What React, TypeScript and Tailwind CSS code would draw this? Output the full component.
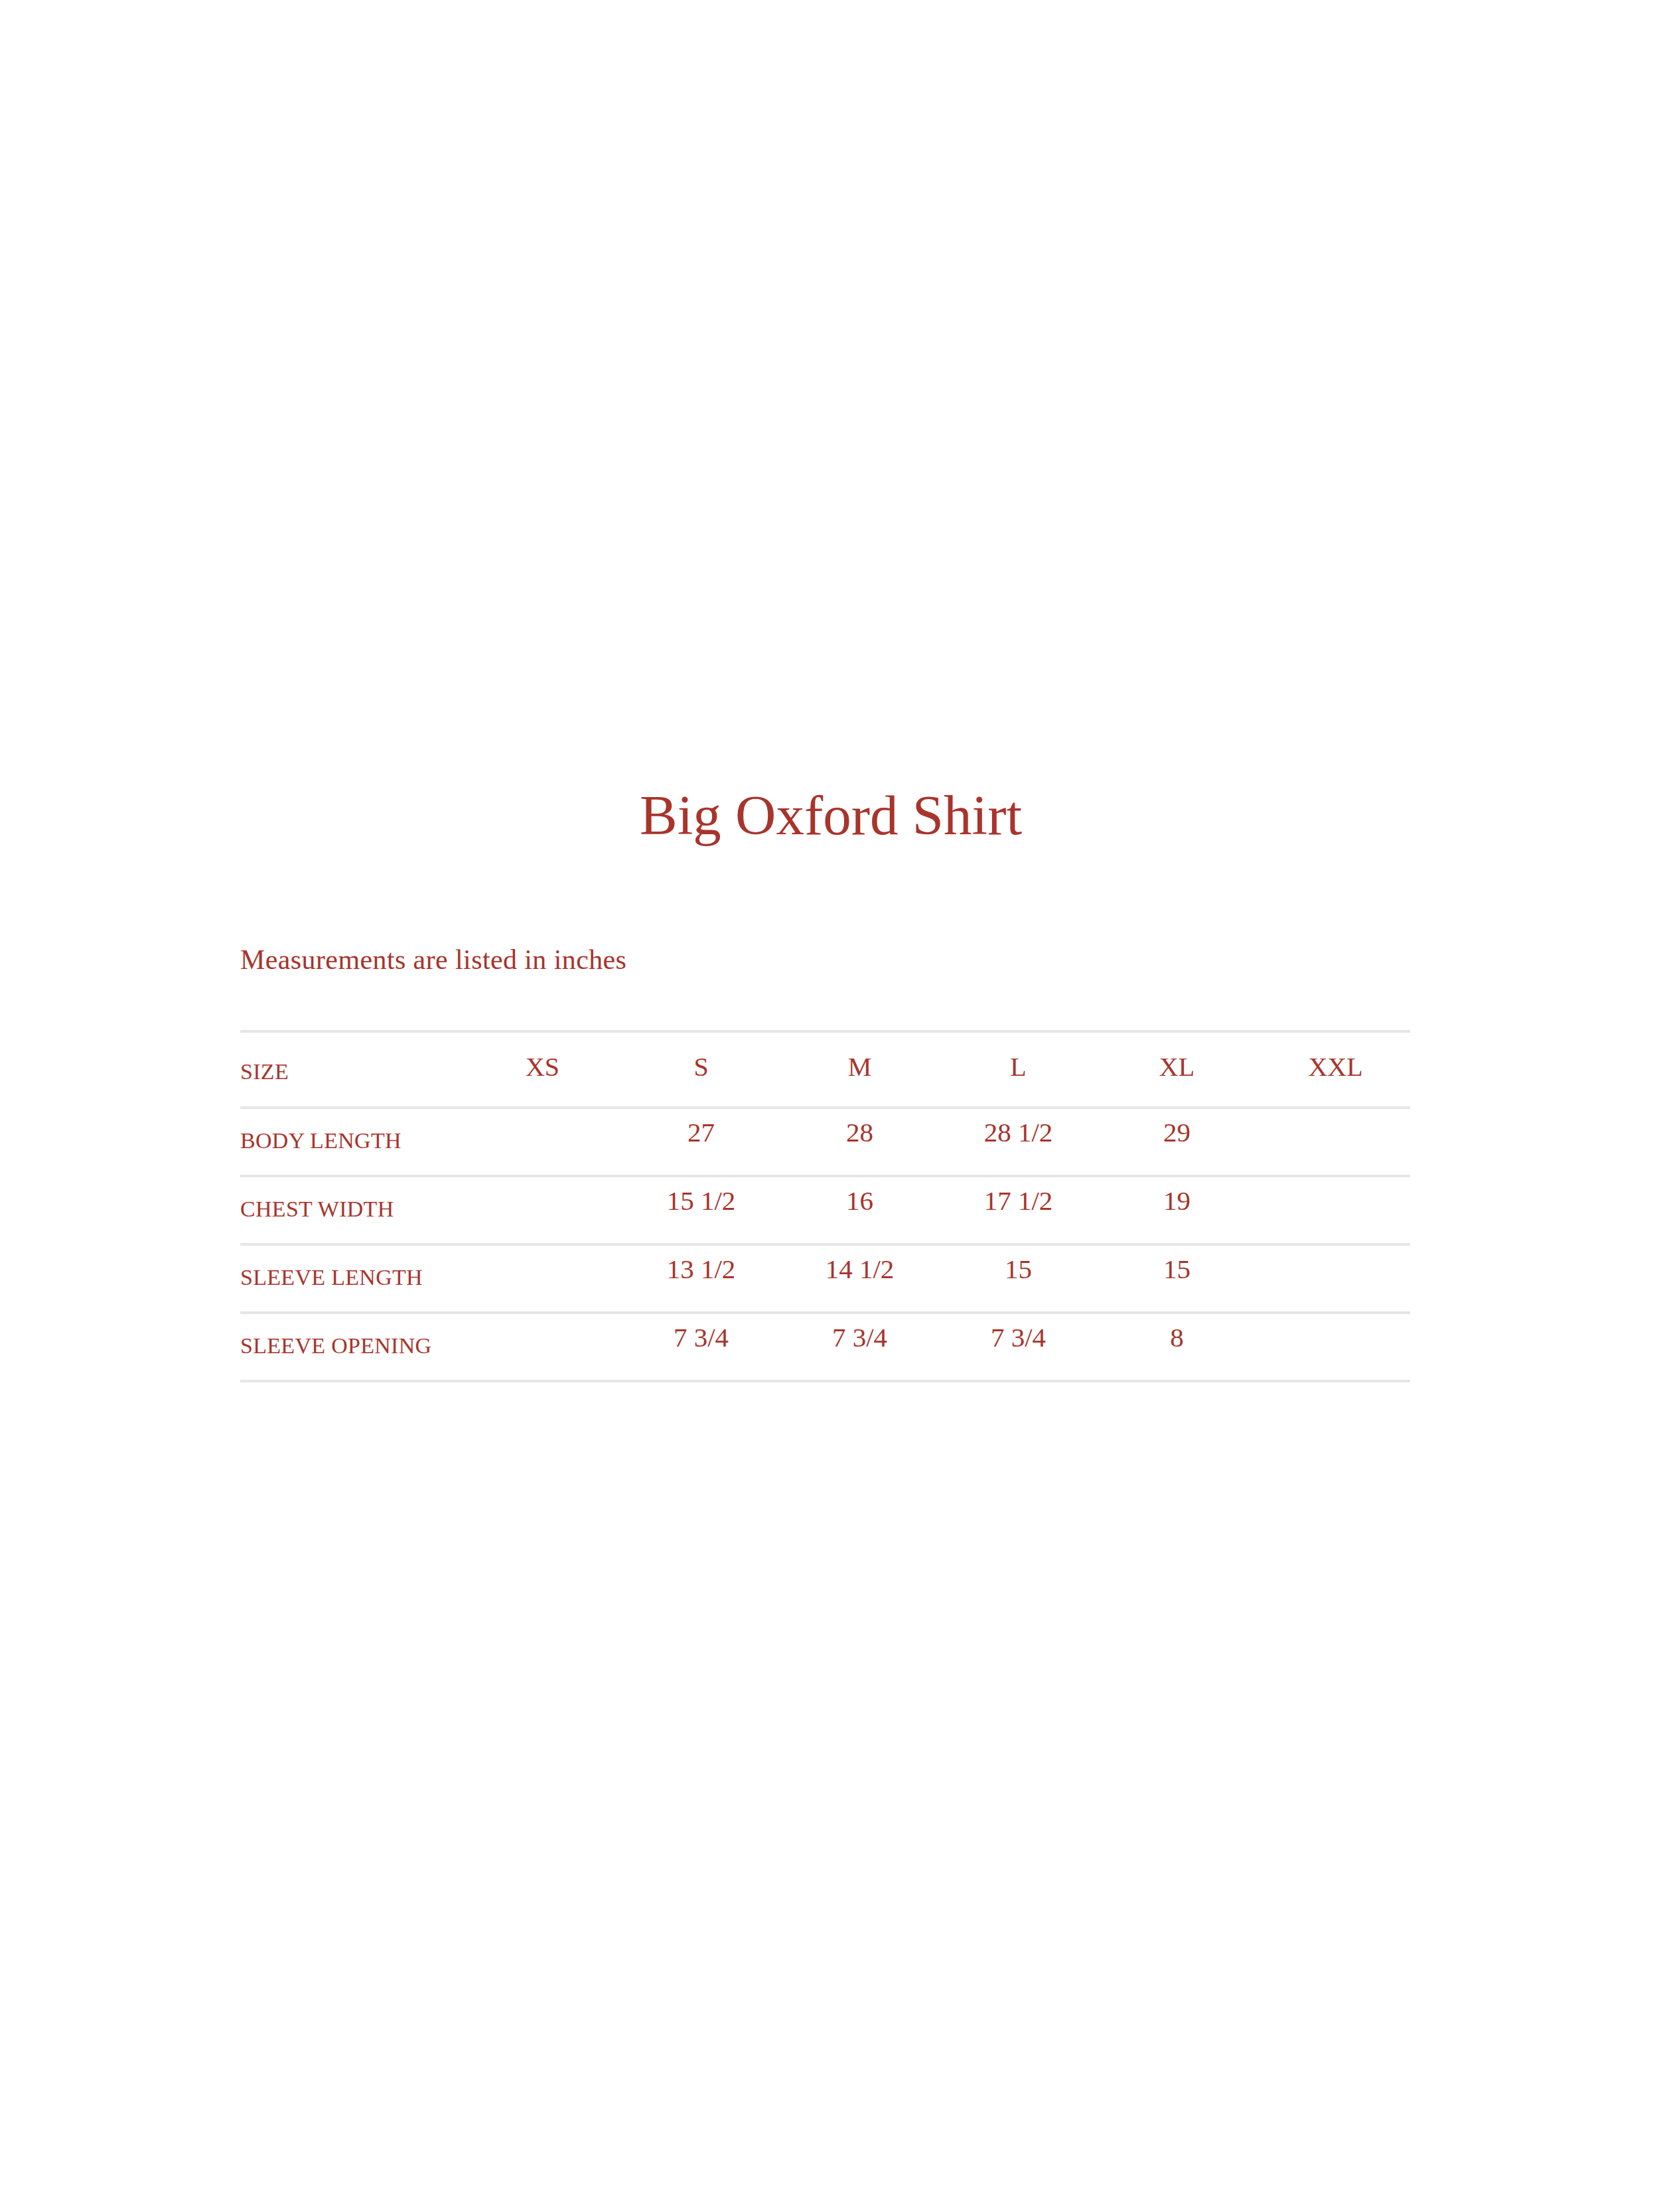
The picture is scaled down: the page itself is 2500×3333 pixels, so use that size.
const sizes = ["XS", "S", "M", "L", "XL", "XXL"];

const rows: { label: string; values: string[] }[] = [
  { label: "BODY LENGTH", values: ["", "27", "28", "28 1/2", "29", ""] },
  { label: "CHEST WIDTH", values: ["", "15 1/2", "16", "17 1/2", "19", ""] },
  { label: "SLEEVE LENGTH", values: ["", "13 1/2", "14 1/2", "15", "15", ""] },
  { label: "SLEEVE OPENING", values: ["", "7 3/4", "7 3/4", "7 3/4", "8", ""] },
];

const App = () => {
  return (
    <div className="min-h-[3333px] bg-white text-[#a8342c] font-['Liberation_Serif',serif] pt-[1186px]">
      {/* Title */}
      <h1 className="text-center text-[85px] leading-none pl-[4px]">Big Oxford Shirt</h1>

      <div className="pl-[362px] pt-[154px]">
        <div className="w-[1763px]">
          <p className="text-[42px] leading-none tracking-[0.4px]">Measurements are listed in inches</p>

          {/* Size chart */}
          <div className="mt-[85px] border-t-4 border-[#e6e6e6]">
            <div className="grid grid-cols-[336px_repeat(6,239px)] h-[115px] border-b-4 border-[#e6e6e6]">
              <div className="text-[34px] leading-none pt-[42px] tracking-[0.3px]">SIZE</div>
              {sizes.map((s) => (
                <div key={s} className="text-center text-[40px] leading-none pt-[32px]">
                  {s}
                </div>
              ))}
            </div>

            {rows.map((row) => (
              <div
                key={row.label}
                className="grid grid-cols-[336px_repeat(6,239px)] h-[103px] border-b-4 border-[#e6e6e6]"
              >
                <div className="text-[34px] leading-none pt-[31px] tracking-[0.3px]">{row.label}</div>
                {row.values.map((v, i) => (
                  <div key={i} className="text-center text-[41px] leading-none pt-[15px]">
                    {v}
                  </div>
                ))}
              </div>
            ))}
          </div>
        </div>
      </div>
    </div>
  );
};

export default App;
